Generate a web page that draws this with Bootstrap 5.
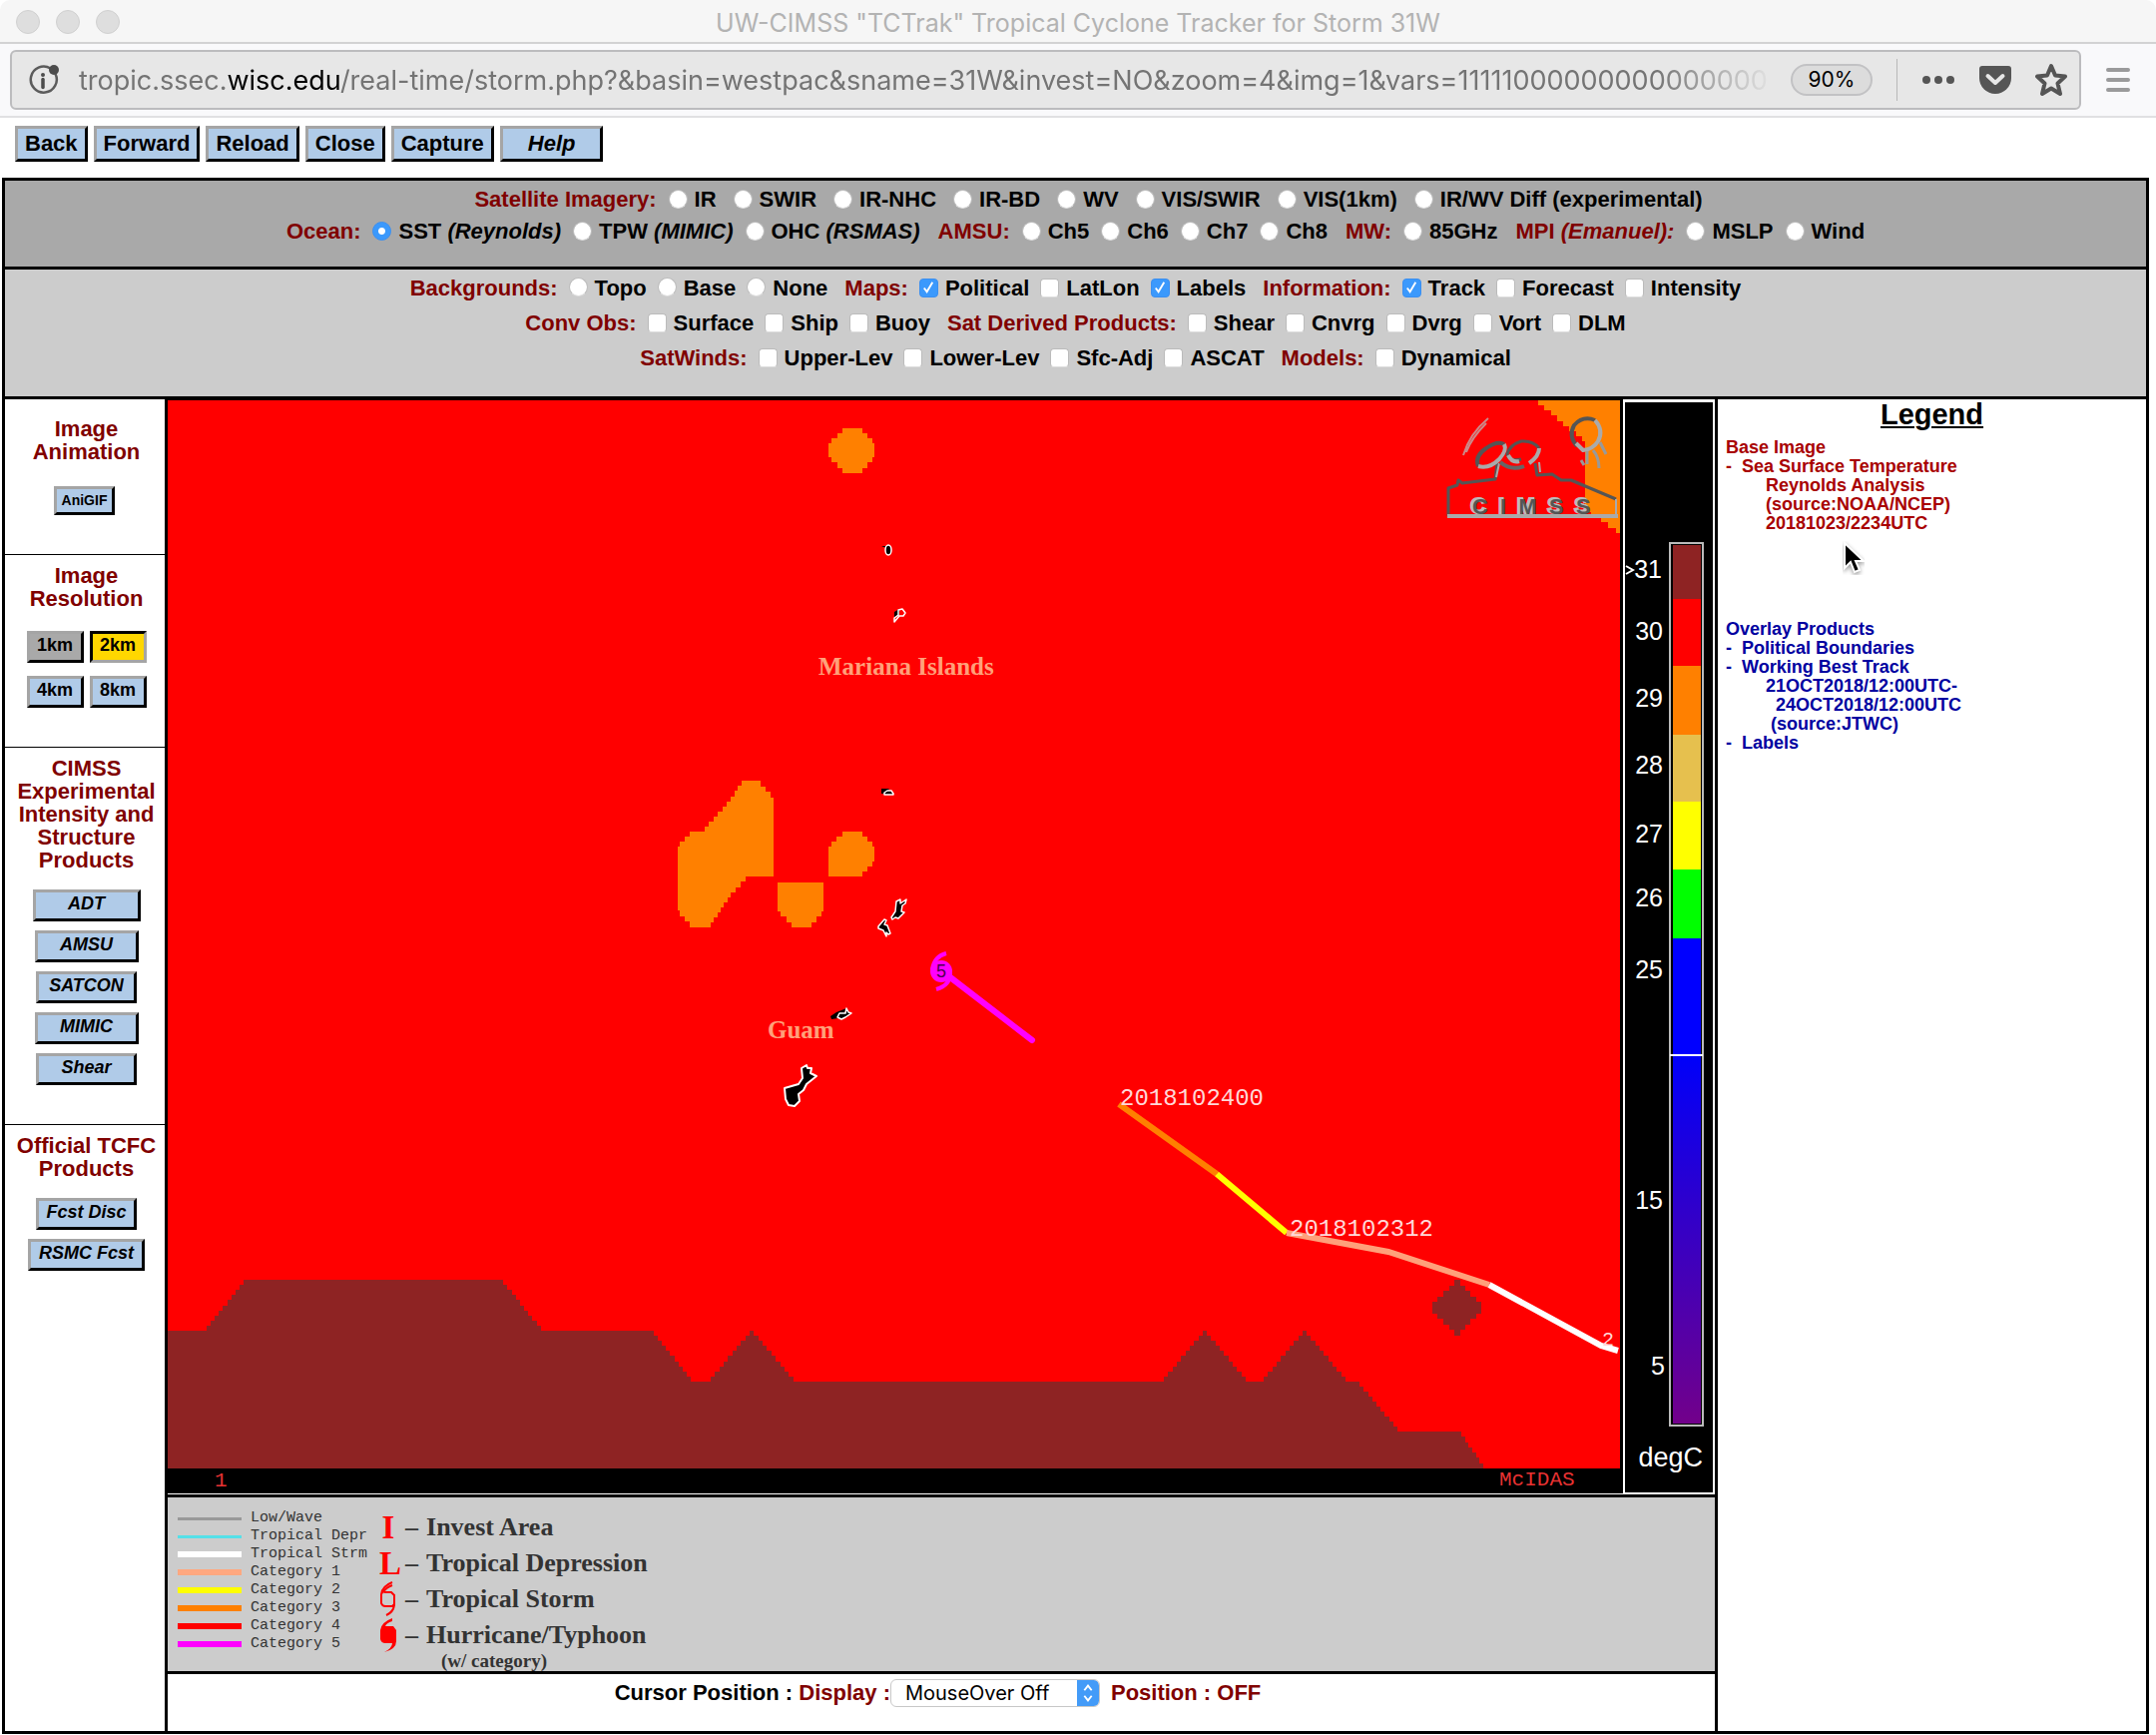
<!DOCTYPE html>
<html lang="en">
<head>
<meta charset="utf-8">
<meta name="viewport" content="width=device-width, initial-scale=1">
<title>UW-CIMSS "TCTrak" Tropical Cyclone Tracker for Storm 31W</title>
<link rel="stylesheet" href="https://cdn.jsdelivr.net/npm/bootstrap@5.3.0/dist/css/bootstrap.min.css">
<style>
  :root { --maroon: #800000; --steel: #b0cbe8; --rule: 3px solid #000; }
  body { font-family: "Liberation Sans", Arial, sans-serif; font-size: 22px; color: #000; background: #fff; }
  .chrome { font-family: Inter, Roboto, sans-serif; }
  .titlebar { height: 44px; background: #f6f6f6; border-bottom: 2px solid #d2d2d3; border-radius: 10px 10px 0 0; padding-top: 3px; }
  .titlebar h1 { font-size: 25px; font-weight: 400; color: #b3b3b3; }
  .lights { left: 16px; top: 10px; }
  .lights span { width: 24px; height: 24px; border-radius: 50%; background: #dedede; border: 1px solid #d0d0d0; }
  .toolbar { height: 74px; background: #f9f9fb; border-bottom: 2px solid #e0e0e2; padding: 0 25px 0 10px; gap: 24px; }
  .field { height: 60px; background: #e7e7e7; border: 2px solid #bcbcbe; border-radius: 6px; padding: 0 12px 0 17px; }
  .address { font-size: 27px; padding-top: 2px; color: #747474; white-space: nowrap; -webkit-mask-image: linear-gradient(90deg, #000 93%, transparent); mask-image: linear-gradient(90deg, #000 93%, transparent); }
  .address b { font-weight: 400; color: #000; }
  .zoompill { width: 82px; height: 32px; border: 2px solid #c2c2c4; border-radius: 16px; background: #dcdcdc; font-size: 21px; line-height: 28px; padding: 0; }
  .sep { width: 1px; height: 42px; background: #b8b8b8; }
  .icbtn { border: 0; background: none; padding: 0; line-height: 0; }

  .bev { font-family: inherit; font-weight: 700; color: #000; background: var(--steel); border: 3px solid; border-color: #a5a5a5 #000 #000 #a5a5a5; border-radius: 0; padding: 0; }
  .top-btn { height: 36px; font-size: 22px; line-height: 28px; padding: 0 7px 1px; }
  .top-btn.wide { padding: 0 25px 1px; }
  .side-btn { height: 32px; font-size: 18px; line-height: 23px; padding-bottom: 3px; }
  .w-s { width: 57px; } .w-m { width: 101px; } .w-l { width: 104px; } .w-xl { width: 108px; } .w-xxl { width: 117px; }
  .gif-btn { display: block; width: 61px; height: 29px; font-size: 14px; line-height: 21px; margin-left: 46px; }

  .frame { margin: 0 7px 0 2px; border: var(--rule); }
  .panel { font-weight: 700; text-align: center; border-bottom: var(--rule); }
  .dark { background: #a9a9a9; padding: 3px 0 19px; }
  .light { background: #ccc; padding: 1px 0 21px; }
  .opts { line-height: 32px; column-gap: 12px; }
  .light .opts { line-height: 35px; column-gap: 11px; }
  .opts.loose { column-gap: 17px; padding-left: 26px; }
  .opts.loose .hd { margin-right: -5px; }
  .hd, .maroon { color: var(--maroon); }
  .hd ~ .hd { margin-left: 6px; }
  .opt { display: inline-flex; align-items: center; gap: 7px; }
  .opt input { appearance: none; width: 19px; height: 19px; margin: 0; background: #fff; border: 1px solid #bbb; border-bottom-color: #ddd; }
  .opt input[type=radio] { border-radius: 50%; margin-top: -2px; }
  .opt input[type=checkbox] { border-radius: 4px; }
  .opt input:checked { background-color: #3b99fc; border-color: #3b8ff0; }
  .opt input[type=radio]:checked { background-image: radial-gradient(circle, #fff 3px, transparent 4px); }
  .opt input[type=checkbox]:checked { background-image: url("data:image/svg+xml,%3Csvg xmlns='http://www.w3.org/2000/svg' viewBox='0 0 18 18'%3E%3Cpath d='M4 9l3 4 6-10' fill='none' stroke='%23fff' stroke-width='2'/%3E%3C/svg%3E"); }

  .side { width: 163px; border-right: var(--rule); text-align: center; }
  .side section { padding: 9px 0 39px 3px; border-bottom: 1px solid #000; }
  .side section:first-child { padding-top: 18px; }
  .side section:last-child { border: 0; }
  .side h2 { font-size: 22px; line-height: 23px; font-weight: 700; color: var(--maroon); margin: 0 0 18px; }
  .side section:first-child h2 { margin-bottom: 23px; }
  .side section:nth-child(2) h2 { margin-bottom: 21px; }
  .stack { display: flex; flex-direction: column; align-items: center; gap: 9px; }
  .res { row-gap: 13px; column-gap: 6px; }

  .imagery { border-bottom: 1px solid #fff; }
  .imagery svg { display: block; min-width: 0; }
  .sst { flex: 1458 1 0; }
  .bar { flex: 92 1 0; }
  .key { background: #ccc; border-top: var(--rule); border-bottom: var(--rule); height: 180px; color: #333; padding: 12px 0 0 10px; gap: 12px; }
  .tracks { font-family: "Liberation Mono", monospace; font-size: 15px; line-height: 18px; margin: 0; }
  .tracks li { display: flex; align-items: center; gap: 9px; white-space: pre; }
  .tracks i { width: 64px; height: 6px; }
  .tracks .thin { height: 3px; }
  .symbols { font-family: "Liberation Serif", serif; font-weight: 700; font-size: 26px; line-height: 36px; margin: 0; }
  .symbols li { display: flex; align-items: center; gap: 8px; white-space: nowrap; }
  .symbols .sym { width: 18px; color: #f00; font-size: 33px; text-align: center; }
  .symbols .sym svg { display: block; }
  .symbols .cat { font-size: 19px; line-height: 16px; padding-left: 62px; }
  .cursorbar { height: 57px; font-weight: 700; padding: 5px 7px 0 0; line-height: 28px; }
  .mouse { width: 210px; height: 28px; margin-right: 11px; font: 400 20px/26px Inter, Roboto, sans-serif; padding: 0 0 0 14px; color: #000; border: 1px solid #c8c8c8; border-radius: 6px; appearance: none; background: #fff url("data:image/svg+xml,%3Csvg xmlns='http://www.w3.org/2000/svg' viewBox='0 0 24 28'%3E%3Cpath d='M0 0h18q6 0 6 6v16q0 6-6 6h-18z' fill='%23439bf8'/%3E%3Cpath d='M8 11l4-5 4 5M8 17l4 5 4-5' fill='none' stroke='%23fff' stroke-width='2'/%3E%3C/svg%3E") no-repeat right center / auto 100%; }
  .legend { width: 432px; border-left: var(--rule); font-weight: 700; font-size: 18px; line-height: 19px; padding-left: 8px; }
  .legend h2 { font-size: 29px; line-height: 31px; font-weight: 700; text-decoration: underline; text-underline-offset: 2px; text-decoration-thickness: 2px; text-align: center; margin: 0 8px 8px 0; }
  .legend pre { font: inherit; margin: 0; overflow: visible; }
  .base { color: #a80000; }
  .over { color: #0000a0; padding-top: 87px; }
  .pointer { position: absolute; left: 125px; top: 142px; }
</style>
</head>
<body>
<header class="chrome">
  <div class="titlebar position-relative d-flex align-items-center justify-content-center">
    <div class="lights position-absolute d-flex gap-3"><span></span><span></span><span></span></div>
    <h1 class="m-0">UW-CIMSS "TCTrak" Tropical Cyclone Tracker for Storm 31W</h1>
  </div>
  <div class="toolbar d-flex align-items-center">
    <div class="field d-flex align-items-center flex-grow-1">
      <svg class="flex-shrink-0" width="34" height="34" viewBox="0 0 34 34"><path d="M21.500 5.500A13 13 0 1 0 26.500 11" fill="none" stroke="#5c5c5c" stroke-width="2.500"/><circle cx="25" cy="7" r="5" fill="#4c4c4c"/><circle cx="14" cy="12" r="2" fill="#4c4c4c"/><path d="M14 16.500v8" stroke="#4c4c4c" stroke-width="3.500" stroke-linecap="round"/></svg>
      <div class="address flex-grow-1 ms-3" role="textbox" aria-label="Address">tropic.ssec.<b>wisc.edu</b>/real-time/storm.php?&amp;basin=westpac&amp;sname=31W&amp;invest=NO&amp;zoom=4&amp;img=1&amp;vars=11111000000000000000</div>
      <button class="zoompill flex-shrink-0 ms-3" type="button">90%</button>
      <span class="sep flex-shrink-0 ms-4 me-4"></span>
      <button class="icbtn flex-shrink-0" type="button" aria-label="Page actions"><svg width="34" height="34" viewBox="0 0 34 34" fill="#555"><circle cx="5" cy="17" r="4"/><circle cx="17" cy="17" r="4"/><circle cx="29" cy="17" r="4"/></svg></button>
      <button class="icbtn flex-shrink-0 ms-4" type="button" aria-label="Save to Pocket"><svg width="32" height="32" viewBox="0 0 32 32"><path d="M3 2h26q3 0 3 3v9a16 16 0 0 1-32 0V5q0-3 3-3z" fill="#555"/><path d="M8.500 12l7.500 7 7.500-7" fill="none" stroke="#e7e7e7" stroke-width="4" stroke-linecap="round" stroke-linejoin="round"/></svg></button>
      <button class="icbtn flex-shrink-0 ms-4" type="button" aria-label="Bookmark"><svg width="32" height="34" viewBox="0 0 32 34"><path d="M16 3l4 9.500 10 1-7.500 7L25 31l-9-5.500L7 31l2.500-10.500L2 13.500l10-1z" fill="none" stroke="#555" stroke-width="4" stroke-linejoin="round"/></svg></button>
    </div>
    <button class="icbtn flex-shrink-0" type="button" aria-label="Menu"><svg width="26" height="26" viewBox="0 0 26 26"><path d="M3 3h20M3 13h20M3 23h20" stroke="#9a9a9b" stroke-width="4" stroke-linecap="round"/></svg></button>
  </div>
</header>

<nav class="d-flex pt-2 mb-3" style="gap:6px;padding-left:15px">
  <button type="button" class="bev top-btn">Back</button>
  <button type="button" class="bev top-btn">Forward</button>
  <button type="button" class="bev top-btn">Reload</button>
  <button type="button" class="bev top-btn">Close</button>
  <button type="button" class="bev top-btn">Capture</button>
  <button type="button" class="bev top-btn wide"><em>Help</em></button>
</nav>

<main class="frame">
  <form class="panel dark">
    <div class="opts loose d-flex flex-wrap justify-content-center">
      <span class="hd">Satellite Imagery:</span>
      <label class="opt"><input type="radio" name="img">IR</label>
      <label class="opt"><input type="radio" name="img">SWIR</label>
      <label class="opt"><input type="radio" name="img">IR-NHC</label>
      <label class="opt"><input type="radio" name="img">IR-BD</label>
      <label class="opt"><input type="radio" name="img">WV</label>
      <label class="opt"><input type="radio" name="img">VIS/SWIR</label>
      <label class="opt"><input type="radio" name="img">VIS(1km)</label>
      <label class="opt"><input type="radio" name="img">IR/WV Diff (experimental)</label>
    </div>
    <div class="opts d-flex flex-wrap justify-content-center">
      <span class="hd">Ocean:</span>
      <label class="opt"><input type="radio" name="img" checked><span>SST <em>(Reynolds)</em></span></label>
      <label class="opt"><input type="radio" name="img"><span>TPW <em>(MIMIC)</em></span></label>
      <label class="opt"><input type="radio" name="img"><span>OHC <em>(RSMAS)</em></span></label>
      <span class="hd">AMSU:</span>
      <label class="opt"><input type="radio" name="img">Ch5</label>
      <label class="opt"><input type="radio" name="img">Ch6</label>
      <label class="opt"><input type="radio" name="img">Ch7</label>
      <label class="opt"><input type="radio" name="img">Ch8</label>
      <span class="hd">MW:</span>
      <label class="opt"><input type="radio" name="img">85GHz</label>
      <span class="hd">MPI <em>(Emanuel):</em></span>
      <label class="opt"><input type="radio" name="img">MSLP</label>
      <label class="opt"><input type="radio" name="img">Wind</label>
    </div>
  </form>
  <form class="panel light">
    <div class="opts d-flex flex-wrap justify-content-center">
      <span class="hd">Backgrounds:</span>
      <label class="opt"><input type="radio" name="bg">Topo</label>
      <label class="opt"><input type="radio" name="bg">Base</label>
      <label class="opt"><input type="radio" name="bg">None</label>
      <span class="hd">Maps:</span>
      <label class="opt"><input type="checkbox" checked>Political</label>
      <label class="opt"><input type="checkbox">LatLon</label>
      <label class="opt"><input type="checkbox" checked>Labels</label>
      <span class="hd">Information:</span>
      <label class="opt"><input type="checkbox" checked>Track</label>
      <label class="opt"><input type="checkbox">Forecast</label>
      <label class="opt"><input type="checkbox">Intensity</label>
    </div>
    <div class="opts d-flex flex-wrap justify-content-center">
      <span class="hd">Conv Obs:</span>
      <label class="opt"><input type="checkbox">Surface</label>
      <label class="opt"><input type="checkbox">Ship</label>
      <label class="opt"><input type="checkbox">Buoy</label>
      <span class="hd">Sat Derived Products:</span>
      <label class="opt"><input type="checkbox">Shear</label>
      <label class="opt"><input type="checkbox">Cnvrg</label>
      <label class="opt"><input type="checkbox">Dvrg</label>
      <label class="opt"><input type="checkbox">Vort</label>
      <label class="opt"><input type="checkbox">DLM</label>
    </div>
    <div class="opts d-flex flex-wrap justify-content-center">
      <span class="hd">SatWinds:</span>
      <label class="opt"><input type="checkbox">Upper-Lev</label>
      <label class="opt"><input type="checkbox">Lower-Lev</label>
      <label class="opt"><input type="checkbox">Sfc-Adj</label>
      <label class="opt"><input type="checkbox">ASCAT</label>
      <span class="hd">Models:</span>
      <label class="opt"><input type="checkbox">Dynamical</label>
    </div>
  </form>

  <div class="d-flex">
    <aside class="side flex-shrink-0">
      <section>
        <h2>Image<br>Animation</h2>
        <button type="button" class="bev gif-btn">AniGIF</button>
      </section>
      <section>
        <h2>Image<br>Resolution</h2>
        <div class="res d-flex flex-wrap justify-content-center">
          <button type="button" class="bev side-btn w-s" style="background:#a9a9a9">1km</button>
          <button type="button" class="bev side-btn w-s" style="background:#ffd700;border-color:#000 #a5a5a5 #a5a5a5 #000">2km</button>
          <button type="button" class="bev side-btn w-s">4km</button>
          <button type="button" class="bev side-btn w-s">8km</button>
        </div>
      </section>
      <section>
        <h2>CIMSS<br>Experimental<br>Intensity and<br>Structure<br>Products</h2>
        <div class="stack">
          <button type="button" class="bev side-btn w-xl"><em>ADT</em></button>
          <button type="button" class="bev side-btn w-l"><em>AMSU</em></button>
          <button type="button" class="bev side-btn w-m"><em>SATCON</em></button>
          <button type="button" class="bev side-btn w-l"><em>MIMIC</em></button>
          <button type="button" class="bev side-btn w-m"><em>Shear</em></button>
        </div>
      </section>
      <section>
        <h2>Official TCFC<br>Products</h2>
        <div class="stack">
          <button type="button" class="bev side-btn w-m"><em>Fcst Disc</em></button>
          <button type="button" class="bev side-btn w-xxl"><em>RSMC Fcst</em></button>
        </div>
      </section>
    </aside>

    <div class="flex-grow-1" style="min-width:0">
      <div class="imagery d-flex">
        <svg class="sst" viewBox="168 399 1458 1096">
          <rect x="168" y="399" width="1458" height="1096" fill="#000"/>
          <rect x="168" y="400" width="1455" height="1070" fill="#f00"/>
          <g id="cells" shape-rendering="crispEdges"></g>
          <g stroke-width="6" fill="none">
            <path d="M1121 1105L1219 1175" stroke="#ff8000"/>
            <path d="M1219 1175L1289 1234" stroke="#ff0"/>
            <path d="M1289 1234L1391 1253L1492 1286" stroke="#ffa07a"/>
            <path d="M1492 1286L1604 1347L1621 1352" stroke="#fff"/>
            <path d="M952 978L1034 1041" stroke="#f0f" stroke-linecap="round"/>
          </g>
          <circle cx="943" cy="972" r="11" fill="#f0f"/>
          <path d="M948 954Q936 957 934 970M952 974Q952 986 938 990" stroke="#f0f" stroke-width="4" fill="none"/>
          <text x="943" y="978" font-size="18" fill="#500050" text-anchor="middle">5</text>
          <g fill="#000" stroke="#fff" stroke-width="1.500" stroke-linejoin="round">
            <path d="M883 546h5l2 3z" stroke="none"/><ellipse cx="890" cy="550" rx="3" ry="5"/>
            <path d="M896 612l5-3v6l-5 3z" stroke="none"/><path d="M896 622v-4l4-3v-5l4-1 3 4-2 3h-4z" fill="none"/>
            <path d="M883 789h8l-4 5h-4z" stroke="none"/><path d="M886 795v-2l3-2h4l2 3v1z"/>
            <path d="M880 927l6-7 2 1-2 4 3 1 3 8-2 1-2-2v4l-3-6-5-2z"/>
            <path d="M893 918l4-6 1-10 4-2v4l6-4-1 4-3 2-1 6 3 1-6 6-3-1-3 2z"/>
            <path d="M832 1017l6-4 10-4-2 5-6 5-7 1z" stroke="none"/><path d="M839 1018l2-4 6 0 1-5 2 4 3 1-6 4-4 2z"/>
            <path d="M786 1089l14-4 4-6-1-10 5-3 1 3h4l-1 5 6 3-10 8-3 6-5 4 1 7-5 5-6-1-3-6z" stroke-width="2"/>
          </g>
          <g font-family="Liberation Serif, serif" font-weight="700" font-size="25" fill="#ffa07a">
            <text x="820" y="675">Mariana Islands</text><text x="769" y="1039">Guam</text>
          </g>
          <g font-family="Liberation Mono, monospace" font-size="24" fill="#ffd8d8">
            <text x="1122" y="1106">2018102400</text><text x="1292" y="1237">2018102312</text><text x="1605" y="1347" font-size="20">2</text>
          </g>
          <g font-family="Liberation Mono, monospace" font-size="21" fill="#e83232">
            <text x="215" y="1488">1</text><text x="1502" y="1487">McIDAS</text>
          </g>
          <g fill="none" stroke-linejoin="round">
            <path d="M1451 516V488L1460 485L1461 480L1465 483L1498 479L1500 463M1538 463L1540 475L1555 474L1564 480L1574 480L1619 499" stroke="#555" stroke-width="3"/>
            <path d="M1502 463L1499 477M1542 462L1543 472M1619 499V514" stroke="#aaa" stroke-width="2"/>
            <path d="M1450 516H1621" stroke="#aaa" stroke-width="4"/>
            <path d="M1481 466Q1477 456 1489 448Q1500 440 1507 444" stroke="#555" stroke-width="4"/>
            <path d="M1507 444Q1510 450 1502 459Q1492 469 1481 466" stroke="#aaa" stroke-width="4"/>
            <path d="M1542 448Q1536 440 1524 441Q1512 445 1510 454Q1512 462 1524 459" stroke="#555" stroke-width="3"/>
            <path d="M1542 448Q1542 456 1532 463M1511 455Q1515 463 1522 461" stroke="#aaa" stroke-width="4"/>
            <path d="M1503 462Q1514 471 1527 466" stroke="#666" stroke-width="4"/>
            <path d="M1580 446Q1571 436 1577 425Q1586 415 1598 420" stroke="#555" stroke-width="4"/>
            <path d="M1598 420Q1607 430 1601 441Q1596 449 1586 450L1579 443" stroke="#aaa" stroke-width="4"/>
            <path d="M1590 451v13M1596 450q6 7 6 18M1603 442l6 12M1584 460l3 5" stroke="#999" stroke-width="3"/>
            <path d="M1491 418Q1472 434 1466 455M1489 423Q1474 438 1469 452" stroke="#c88" stroke-width="2"/>
          </g>
          <g font-size="22" font-weight="700" stroke-width="2">
            <text x="1473" y="513" fill="#bbb" stroke="#bbb" aria-hidden="true">C&#160;&#160;I&#160;&#160;M&#160;&#160;S&#160;&#160;S</text>
            <text x="1475" y="514" fill="#555" stroke="none">C&#160;&#160;I&#160;&#160;M&#160;&#160;S&#160;&#160;S</text>
          </g>
        </svg>
        <svg class="bar" viewBox="1626 399 92 1096">
          <defs><linearGradient id="cold" x1="0" y1="0" x2="0" y2="1"><stop offset="0" stop-color="#0000fa"/><stop offset="1" stop-color="#72008a"/></linearGradient></defs>
          <rect x="1626" y="399" width="92" height="1096" fill="#fff"/>
          <rect x="1628" y="402" width="88" height="1092" fill="#000"/>
          <rect x="1673" y="543" width="33" height="884" fill="#000" stroke="#bbb" stroke-width="2"/>
          <rect x="1676" y="545" width="28" height="54" fill="#8e2323"/>
          <rect x="1676" y="599" width="28" height="67" fill="#f00"/>
          <rect x="1676" y="666" width="28" height="69" fill="#ff8000"/>
          <rect x="1676" y="735" width="28" height="67" fill="#e6c04e"/>
          <rect x="1676" y="802" width="28" height="68" fill="#ff0"/>
          <rect x="1676" y="870" width="28" height="69" fill="#0f0"/>
          <rect x="1676" y="939" width="28" height="117" fill="#00f"/>
          <rect x="1676" y="1056" width="28" height="369" fill="url(#cold)"/>
          <path d="M1673 1056h33" stroke="#fff" stroke-width="2"/>
          <path d="M1629 566l7 4-7 4" fill="none" stroke="#fff" stroke-width="2"/>
          <g fill="#fff" font-size="25" text-anchor="end">
            <text x="1665" y="578">31</text><text x="1666" y="640">30</text><text x="1666" y="707">29</text><text x="1666" y="774">28</text><text x="1666" y="843">27</text><text x="1666" y="907">26</text><text x="1666" y="979">25</text><text x="1666" y="1210">15</text><text x="1668" y="1376">5</text>
            <text x="1706" y="1468" font-size="27">degC</text>
          </g>
        </svg>
      </div>
      <div class="key d-flex">
        <ul class="tracks list-unstyled">
          <li><i class="thin" style="background:#999"></i>Low/Wave</li>
          <li><i class="thin" style="background:#55e0e8"></i>Tropical Depr</li>
          <li><i style="background:#fff"></i>Tropical Strm</li>
          <li><i style="background:#ffa880"></i>Category 1</li>
          <li><i style="background:#ff0"></i>Category 2</li>
          <li><i style="background:#ff8000"></i>Category 3</li>
          <li><i style="background:#f00"></i>Category 4</li>
          <li><i style="background:#f0f"></i>Category 5</li>
        </ul>
        <ul class="symbols list-unstyled">
          <li><span class="sym">I</span><span>–</span><span>Invest Area</span></li>
          <li><span class="sym">L</span><span>–</span><span>Tropical Depression</span></li>
          <li><span class="sym"><svg width="18" height="36" viewBox="0 0 18 36"><path d="M13 1Q3 5 2 13v9q1 3 4 3h7l2-2v-9l-3-3H5M15 20v4q-1 7-8 10M3 12Q7 6 13 4" fill="none" stroke="#f00" stroke-width="2"/></svg></span><span>–</span><span>Tropical Storm</span></li>
          <li><span class="sym"><svg width="18" height="36" viewBox="0 0 18 36"><path d="M13 1Q2 5 1 13v9q1 4 5 4h7q0 5-8 9 12-3 12-11V13l-3-4H6Q7 6 13 4z" fill="#f00"/></svg></span><span>–</span><span>Hurricane/Typhoon</span></li>
          <li class="cat">(w/ category)</li>
        </ul>
      </div>
      <div class="cursorbar d-flex justify-content-center">
        <label for="mo">Cursor Position : <span class="maroon">Display :</span></label>
        <select id="mo" class="mouse"><option>MouseOver Off</option></select>
        <span class="maroon">Position : OFF</span>
      </div>
    </div>

    <aside class="legend flex-shrink-0 position-relative">
      <h2>Legend</h2>
<pre class="base">Base Image
-  Sea Surface Temperature
        Reynolds Analysis
        (source:NOAA/NCEP)
        20181023/2234UTC</pre>
<pre class="over">Overlay Products
-  Political Boundaries
-  Working Best Track
        21OCT2018/12:00UTC-
          24OCT2018/12:00UTC
         (source:JTWC)
-  Labels</pre>
      <svg class="pointer" width="22" height="34" viewBox="0 0 22 34"><path d="M2 2v25l6-6 4 10 5-2-4-9h8z" fill="#000" stroke="#fff" stroke-width="2" style="filter:drop-shadow(0 2px 2px rgba(0,0,0,.4))"/></svg>
    </aside>
  </div>
</main>

<script src="https://cdn.jsdelivr.net/npm/bootstrap@5.3.0/dist/js/bootstrap.bundle.min.js"></script>
<script>
  // Temperature regions: corner points, whose sloping edges follow the data grid in steps.
  const STEP = 5.2;
  const regions = [
    ['#ff8000', [[847,428],[861,428],[876,443],[876,457],[861,473],[847,473],[830,457],[830,443]]],
    ['#ff8000', [[745,781],[759,781],[775,798],[775,877],[750,877],[734,893],[710,928],[694,928],[679,911],[679,847],[694,832],[704,832],[730,802]]],
    ['#ff8000', [[847,832],[861,832],[876,847],[876,862],[861,877],[830,877],[830,847]]],
    ['#ff8000', [[779,883],[825,883],[825,912],[810,928],[796,928],[779,912]]],
    ['#ff8000', [[1538,400],[1623,400],[1623,533],[1600,517],[1588,512],[1588,441]]],
    ['#8e2323', [[168,1332],[205,1332],[246,1281],[502,1281],[544,1332],[653,1332],[694,1383],[710,1383],[753,1332],[797,1383],[1164,1383],[1207,1332],[1250,1383],[1264,1383],[1307,1332],[1350,1383],[1360,1383],[1402,1433],[1462,1433],[1488,1470],[168,1470]]],
    ['#8e2323', [[1460,1281],[1487,1309],[1460,1337],[1432,1309]]]
  ];
  const cells = document.getElementById('cells');
  for (const [fill, pts] of regions) {
    let d = `M${pts[0]}`;
    pts.forEach(([x, y], i) => {
      const [u, v] = pts[(i + 1) % pts.length];
      const n = x === u || y === v ? 1 : Math.max(1, Math.round(Math.abs(v - y) / STEP));
      for (let k = 0; k < n; k++) d += `h${(u - x) / n / 2}v${(v - y) / n}h${(u - x) / n / 2}`;
    });
    const p = document.createElementNS('http://www.w3.org/2000/svg', 'path');
    p.setAttribute('d', d + 'z');
    p.setAttribute('fill', fill);
    cells.append(p);
  }
</script>
</body>
</html>
